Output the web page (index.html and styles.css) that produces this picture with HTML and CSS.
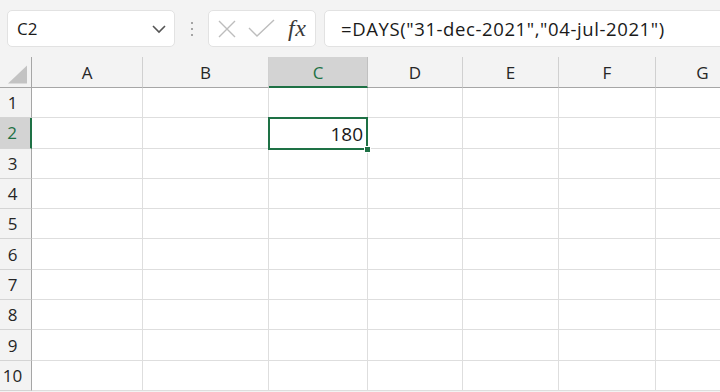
FILE: index.html
```html
<!DOCTYPE html>
<html>
<head>
<meta charset="utf-8">
<link rel="stylesheet" href="styles.css">
</head>
<body>
<div class="app">
  <div class="toolbar">
    <div class="namebox">
      <span class="name">C2</span>
      <svg class="chev" width="16" height="10" viewBox="0 0 16 10"><path d="M2 2 L8 8 L14 2" fill="none" stroke="#555" stroke-width="1.6"/></svg>
    </div>
    <div class="sep"><i></i><i></i><i></i></div>
    <div class="fxbox">
      <svg class="ico" width="20" height="20" viewBox="0 0 20 20"><path d="M2 2 L18 18 M18 2 L2 18" fill="none" stroke="#bdbdbd" stroke-width="1.4"/></svg>
      <svg class="ico" width="28" height="20" viewBox="0 0 28 20"><path d="M1 9 L9 17 L26 1" fill="none" stroke="#bdbdbd" stroke-width="1.4"/></svg>
      <span class="fx">fx</span>
    </div>
    <div class="formula">=DAYS("31-dec-2021","04-jul-2021")</div>
  </div>
  <div class="sheet">
    <div class="corner"><svg width="20" height="19" viewBox="0 0 20 19"><path d="M0 19 L20 19 L20 0 Z" fill="#c3c3c3"/></svg></div>
    <div class="ch">A</div>
    <div class="ch">B</div>
    <div class="ch sel">C</div>
    <div class="ch">D</div>
    <div class="ch">E</div>
    <div class="ch">F</div>
    <div class="ch">G</div>

    <div class="rh">1</div><div class="c"></div><div class="c"></div><div class="c"></div><div class="c"></div><div class="c"></div><div class="c"></div><div class="c"></div>
    <div class="rh sel">2</div><div class="c"></div><div class="c"></div><div class="c active"><span class="val">180</span><span class="frame"></span><span class="handle"></span></div><div class="c"></div><div class="c"></div><div class="c"></div><div class="c"></div>
    <div class="rh">3</div><div class="c"></div><div class="c"></div><div class="c"></div><div class="c"></div><div class="c"></div><div class="c"></div><div class="c"></div>
    <div class="rh">4</div><div class="c"></div><div class="c"></div><div class="c"></div><div class="c"></div><div class="c"></div><div class="c"></div><div class="c"></div>
    <div class="rh">5</div><div class="c"></div><div class="c"></div><div class="c"></div><div class="c"></div><div class="c"></div><div class="c"></div><div class="c"></div>
    <div class="rh">6</div><div class="c"></div><div class="c"></div><div class="c"></div><div class="c"></div><div class="c"></div><div class="c"></div><div class="c"></div>
    <div class="rh">7</div><div class="c"></div><div class="c"></div><div class="c"></div><div class="c"></div><div class="c"></div><div class="c"></div><div class="c"></div>
    <div class="rh">8</div><div class="c"></div><div class="c"></div><div class="c"></div><div class="c"></div><div class="c"></div><div class="c"></div><div class="c"></div>
    <div class="rh">9</div><div class="c"></div><div class="c"></div><div class="c"></div><div class="c"></div><div class="c"></div><div class="c"></div><div class="c"></div>
    <div class="rh">10</div><div class="c"></div><div class="c"></div><div class="c"></div><div class="c"></div><div class="c"></div><div class="c"></div><div class="c"></div>
  </div>
</div>
</body>
</html>
```
FILE: styles.css
```css
html, body {
  margin: 0;
  padding: 0;
  background: #f3f3f3;
  overflow: hidden;
}
.app {
  width: 720px;
  height: 392px;
  overflow: hidden;
  font-family: "Open Sans", "Noto Sans", sans-serif;
  color: #222;
}
.toolbar {
  height: 57px;
  box-sizing: border-box;
  padding: 10px 0 0 7px;
  display: flex;
  align-items: flex-start;
}
.namebox, .fxbox, .formula {
  height: 37px;
  box-sizing: border-box;
  background: #fff;
  border: 1px solid #e2e2e2;
  border-radius: 5px;
  display: flex;
  align-items: center;
}
.namebox {
  width: 168px;
  padding: 0 7px 0 9px;
  justify-content: space-between;
}
.name {
  font-size: 17px;
  color: #1a1a1a;
}
.chev { margin-top: 1px; }
.sep {
  width: 33px;
  height: 37px;
  display: flex;
  flex-direction: column;
  align-items: center;
  justify-content: center;
  gap: 4px;
}
.sep i {
  width: 2px;
  height: 2px;
  background: #8a8a8a;
  border-radius: 1px;
}
.fxbox {
  width: 108px;
  padding: 0 0 0 8px;
  gap: 11px;
}
.ico { display: block; }
.fx {
  font-family: "Liberation Serif", "DejaVu Serif", serif;
  font-style: italic;
  font-size: 24px;
  color: #3a3a3a;
  margin-left: 1px;
  letter-spacing: 0.5px;
}
.formula {
  flex: 1;
  margin-left: 8px;
  margin-right: -12px;
  padding-left: 16px;
  font-size: 18.5px;
  letter-spacing: 0.6px;
  color: #1a1a1a;
  white-space: nowrap;
}
.sheet {
  display: grid;
  grid-template-columns: 32px 111px 126px 99px 95px 96px 97px 94px;
  grid-template-rows: 31px repeat(10, 30.3px);
  background: #fff;
}
.corner {
  background: #f3f3f3;
  border-right: 1px solid #a6a6a6;
  border-bottom: 1px solid #a6a6a6;
  box-sizing: border-box;
  display: flex;
  align-items: flex-end;
  padding: 0 4px 3px 8px;
}
.corner svg { display: block; }
.ch {
  background: #f3f3f3;
  border-right: 1px solid #d0d0d0;
  border-bottom: 1px solid #a6a6a6;
  box-sizing: border-box;
  display: flex;
  align-items: center;
  justify-content: center;
  font-size: 17px;
  color: #262626;
  padding-top: 1px;
}
.ch.sel {
  background: #d3d3d3;
  color: #1e7145;
  border-bottom: 2px solid #1e7145;
  border-right-color: #c0c0c0;
}
.rh {
  background: #f3f3f3;
  border-right: 1px solid #a6a6a6;
  border-bottom: 1px solid #d4d4d4;
  box-sizing: border-box;
  display: flex;
  align-items: center;
  justify-content: center;
  padding-right: 6px;
  font-size: 17px;
  color: #262626;
}
.rh.sel {
  background: #d3d3d3;
  color: #1e7145;
  border-right: 2px solid #1e7145;
}
.c {
  border-right: 1px solid #dedede;
  border-bottom: 1px solid #dedede;
  box-sizing: border-box;
}
.c.active {
  position: relative;
  display: flex;
  align-items: center;
  justify-content: flex-end;
  padding-right: 4px;
  padding-top: 2px;
}
.val {
  font-size: 19px;
  color: #1a1a1a;
}
.frame {
  position: absolute;
  left: -1px;
  top: -1px;
  right: -1px;
  bottom: -2px;
  border: 2px solid #1e7145;
}
.handle {
  position: absolute;
  right: -4px;
  bottom: -5px;
  width: 5px;
  height: 5px;
  background: #1e7145;
  border: 1px solid #fff;
}
```
